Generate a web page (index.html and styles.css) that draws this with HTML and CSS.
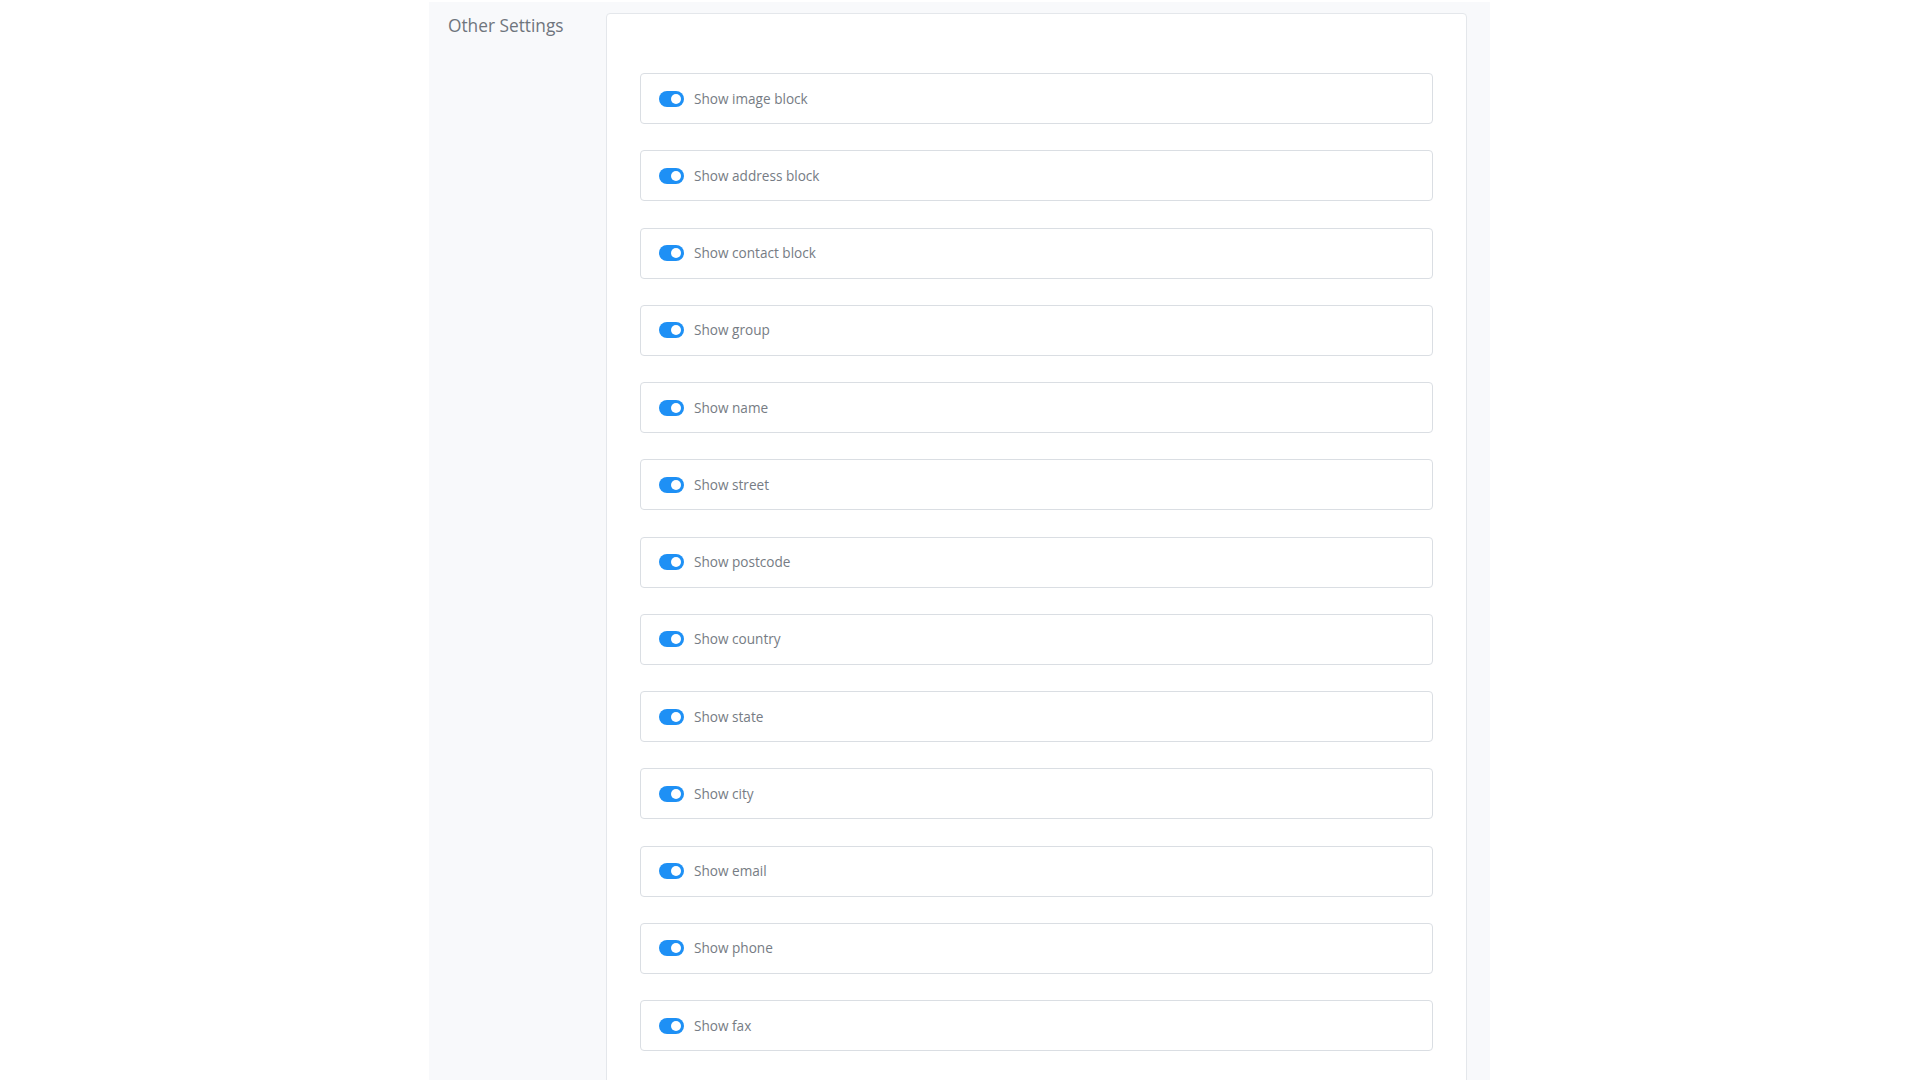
FILE: index.html
```html
<!DOCTYPE html>
<html lang="en">
<head>
<meta charset="utf-8">
<title>Other Settings</title>
<link rel="stylesheet" href="styles.css">
</head>
<body>
<div class="panel">
  <div class="label-col">Other Settings</div>
  <div class="card">
    <div class="row"><span class="switch"><span class="knob"></span></span><span class="text">Show image block</span></div>
    <div class="row"><span class="switch"><span class="knob"></span></span><span class="text">Show address block</span></div>
    <div class="row"><span class="switch"><span class="knob"></span></span><span class="text">Show contact block</span></div>
    <div class="row"><span class="switch"><span class="knob"></span></span><span class="text">Show group</span></div>
    <div class="row"><span class="switch"><span class="knob"></span></span><span class="text">Show name</span></div>
    <div class="row"><span class="switch"><span class="knob"></span></span><span class="text">Show street</span></div>
    <div class="row"><span class="switch"><span class="knob"></span></span><span class="text">Show postcode</span></div>
    <div class="row"><span class="switch"><span class="knob"></span></span><span class="text">Show country</span></div>
    <div class="row"><span class="switch"><span class="knob"></span></span><span class="text">Show state</span></div>
    <div class="row"><span class="switch"><span class="knob"></span></span><span class="text">Show city</span></div>
    <div class="row"><span class="switch"><span class="knob"></span></span><span class="text">Show email</span></div>
    <div class="row"><span class="switch"><span class="knob"></span></span><span class="text">Show phone</span></div>
    <div class="row"><span class="switch"><span class="knob"></span></span><span class="text">Show fax</span></div>
  </div>
</div>
</body>
</html>
```

FILE: styles.css
```css
html, body {
  margin: 0;
  padding: 0;
  background: #ffffff;
  overflow: hidden;
}

body {
  font-family: "Open Sans", "Noto Sans", sans-serif;
  color: #6c737c;
}

.panel {
  width: 1061px;
  height: 1078px;
  margin: 2px 0 0 429px;
  box-sizing: border-box;
  padding-right: 23px;
  background: #f8f9fb;
  display: flex;
  align-items: flex-start;
  overflow: hidden;
}

.label-col {
  width: 177px;
  flex: none;
  box-sizing: border-box;
  padding: 11px 0 0 19px;
  font-size: 17.3px;
  line-height: 25px;
  color: #6f757d;
}

.card {
  flex: 1;
  margin-top: 11px;
  background: #ffffff;
  border: 1px solid #e4e7eb;
  border-radius: 4px;
  padding: 59px 33px 80px 33px;
}

.row {
  height: 51px;
  box-sizing: border-box;
  border: 1px solid #dadee3;
  border-radius: 4px;
  padding-left: 18px;
  display: flex;
  align-items: center;
  margin-bottom: 26.25px;
}

.switch {
  width: 25px;
  height: 16px;
  border-radius: 8px;
  background: #1e90f5;
  display: flex;
  align-items: center;
  justify-content: flex-end;
  padding-right: 3px;
  box-sizing: border-box;
  flex: none;
}

.knob {
  width: 10px;
  height: 10px;
  border-radius: 50%;
  background: #ffffff;
}

.text {
  margin-left: 10px;
  font-size: 13.6px;
  line-height: 18px;
  color: #767c84;
}
```
